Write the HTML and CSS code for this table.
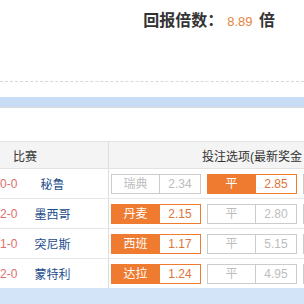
FILE: index.html
```html
<!DOCTYPE html>
<html>
<head>
<meta charset="utf-8">
<link rel="stylesheet" href="styles.css">
</head>
<body>
<div class="top">
  <div class="title"><b>回报倍数：</b><span class="rate">8.89</span><b> 倍</b></div>
</div>
<div class="dash"></div>
<div class="bar"></div>
<div class="table">
  <div class="head">
    <div class="left"><span class="h-match">比赛</span></div>
    <div class="odds-h">投注选项(最新奖金</div>
  </div>
  <div class="row">
    <div class="left"><span class="score">0-0</span><span class="team">秘鲁</span></div>
    <div class="odds">
      <div class="grp"><span class="nm">瑞典</span><span class="od">2.34</span></div>
      <div class="grp on"><span class="nm">平</span><span class="od">2.85</span></div>
      <div class="grp"><span class="nm"></span></div>
    </div>
  </div>
  <div class="row">
    <div class="left"><span class="score">2-0</span><span class="team">墨西哥</span></div>
    <div class="odds">
      <div class="grp on"><span class="nm">丹麦</span><span class="od">2.15</span></div>
      <div class="grp"><span class="nm">平</span><span class="od">2.80</span></div>
      <div class="grp"><span class="nm"></span></div>
    </div>
  </div>
  <div class="row">
    <div class="left"><span class="score">1-0</span><span class="team">突尼斯</span></div>
    <div class="odds">
      <div class="grp on"><span class="nm">西班</span><span class="od">1.17</span></div>
      <div class="grp"><span class="nm">平</span><span class="od">5.15</span></div>
      <div class="grp"><span class="nm"></span></div>
    </div>
  </div>
  <div class="row last">
    <div class="left"><span class="score">2-0</span><span class="team">蒙特利</span></div>
    <div class="odds">
      <div class="grp on"><span class="nm">达拉</span><span class="od">1.24</span></div>
      <div class="grp"><span class="nm">平</span><span class="od">4.95</span></div>
      <div class="grp"><span class="nm"></span></div>
    </div>
  </div>
</div>
<div class="foot"></div>
</body>
</html>
```

FILE: styles.css
```css
html, body {
  margin: 0;
  padding: 0;
  background: #fff;
}
body {
  width: 304px;
  height: 304px;
  overflow: hidden;
  font-family: "Liberation Sans", "Noto Sans CJK SC", sans-serif;
  font-size: 12px;
  color: #333;
}
.top {
  height: 81px;
  box-sizing: border-box;
  padding-top: 10px;
}
.title {
  text-align: right;
  padding-right: 29px;
  line-height: 22px;
  font-size: 16px;
  color: #333;
  white-space: nowrap;
}
.title b {
  font-weight: bold;
}
.rate {
  font-size: 13px;
  color: #e8843f;
  padding: 0 2px 0 4px;
}
.dash {
  border-top: 1px dashed #d8d8d8;
}
.bar {
  margin-top: 15px;
  height: 10px;
  background: #c9dcf6;
  border-bottom: 1px solid #dcdcdc;
}
.table {
  margin-top: 33px;
  border-top: 1px solid #e2e2e2;
}
.head {
  display: flex;
  height: 26px;
  background: #f4f4f4;
  border-bottom: 1px solid #e2e2e2;
  white-space: nowrap;
}
.left {
  width: 108px;
  flex: none;
  display: flex;
  align-items: center;
}
.h-match {
  padding-left: 13px;
  color: #333;
}
.odds-h {
  flex: 1;
  border-left: 1px solid #dddddd;
  padding-left: 93px;
  display: flex;
  align-items: center;
  color: #333;
  overflow: hidden;
}
.row {
  display: flex;
  height: 29px;
  border-bottom: 1px solid #e6e6e6;
}
.row.last {
  border-bottom: none;
}
.score {
  width: 18px;
  flex: none;
  color: #dc6f6f;
}
.team {
  width: 69px;
  flex: none;
  text-align: center;
  color: #1d4d8c;
  font-size: 12px;
}
.odds {
  flex: 1;
  border-left: 1px solid #dddddd;
  padding-left: 2px;
  display: flex;
  align-items: center;
  gap: 6px;
  overflow: hidden;
  white-space: nowrap;
}
.grp {
  display: flex;
  flex: none;
  height: 20px;
}
.nm, .od {
  box-sizing: border-box;
  height: 20px;
  line-height: 18px;
  text-align: center;
  border: 1px solid #cccccc;
  color: #bdbdbd;
  background: #fff;
}
.nm {
  width: 49px;
  font-size: 12px;
}
.od {
  width: 41px;
  border-left: none;
  font-size: 12px;
}
.grp.on .nm {
  background: #ee7b2f;
  border-color: #ee7b2f;
  color: #fff;
}
.grp.on .od {
  border-color: #ee7b2f;
  color: #e0743a;
}
.foot {
  height: 20px;
  background: #d3e3f8;
}
```
